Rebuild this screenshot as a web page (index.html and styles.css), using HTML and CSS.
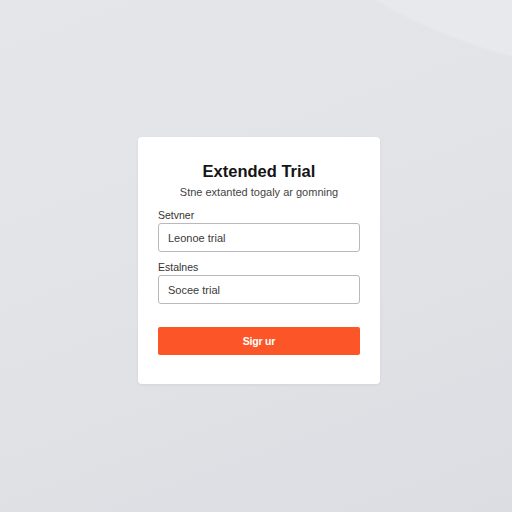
FILE: index.html
```html
<!DOCTYPE html>
<html>
<head>
<meta charset="utf-8">
<link rel="stylesheet" href="styles.css">
</head>
<body>
<div class="card">
  <h1 class="title">Extended Trial</h1>
  <p class="subtitle">Stne extanted togaly ar gomning</p>
  <label class="label">Setvner</label>
  <div class="input">Leonoe trial</div>
  <label class="label second">Estalnes</label>
  <div class="input">Socee trial</div>
  <button class="btn">Sigr ur</button>
</div>
</body>
</html>
```
FILE: styles.css
```css
html, body {
  margin: 0;
  height: 512px;
}
body {
  box-sizing: border-box;
  padding: 137px 0 0 138px;
  font-family: "Liberation Sans", Arial, sans-serif;
  background:
    radial-gradient(ellipse 465px 282px at 700px -200px, #e8e9ec 0%, #e8e9ec 99%, rgba(232,233,236,0) 100%),
    linear-gradient(160deg, #e5e6e9 0%, #e2e3e7 50%, #dcdde2 100%);
  overflow: hidden;
}
.card {
  width: 242px;
  height: 247px;
  box-sizing: border-box;
  background: #fff;
  border-radius: 4px;
  padding: 24px 20px 0 20px;
  display: flex;
  flex-direction: column;
  box-shadow: 0 1px 3px rgba(0,0,0,0.06);
}
.title {
  margin: 0;
  font-size: 16.5px;
  line-height: 20px;
  font-weight: 700;
  color: #151515;
  text-align: center;
}
.subtitle {
  margin: 4px 0 0 0;
  font-size: 11px;
  line-height: 14px;
  color: #444;
  text-align: center;
}
.label {
  margin-top: 9px;
  font-size: 10.5px;
  line-height: 14px;
  color: #333;
}
.label.second {
  margin-top: 8px;
}
.input {
  margin-top: 1px;
  height: 29px;
  box-sizing: border-box;
  border: 1px solid #b9b9bd;
  border-radius: 3px;
  padding-left: 9px;
  display: flex;
  align-items: center;
  font-size: 11px;
  color: #3a3a3a;
}
.btn {
  margin-top: 23px;
  height: 28px;
  border: none;
  border-radius: 2px;
  background: #fc5527;
  color: #fff;
  font-family: "Liberation Sans", Arial, sans-serif;
  font-size: 10.5px;
  font-weight: 700;
  letter-spacing: -0.2px;
  padding: 0;
}
```
